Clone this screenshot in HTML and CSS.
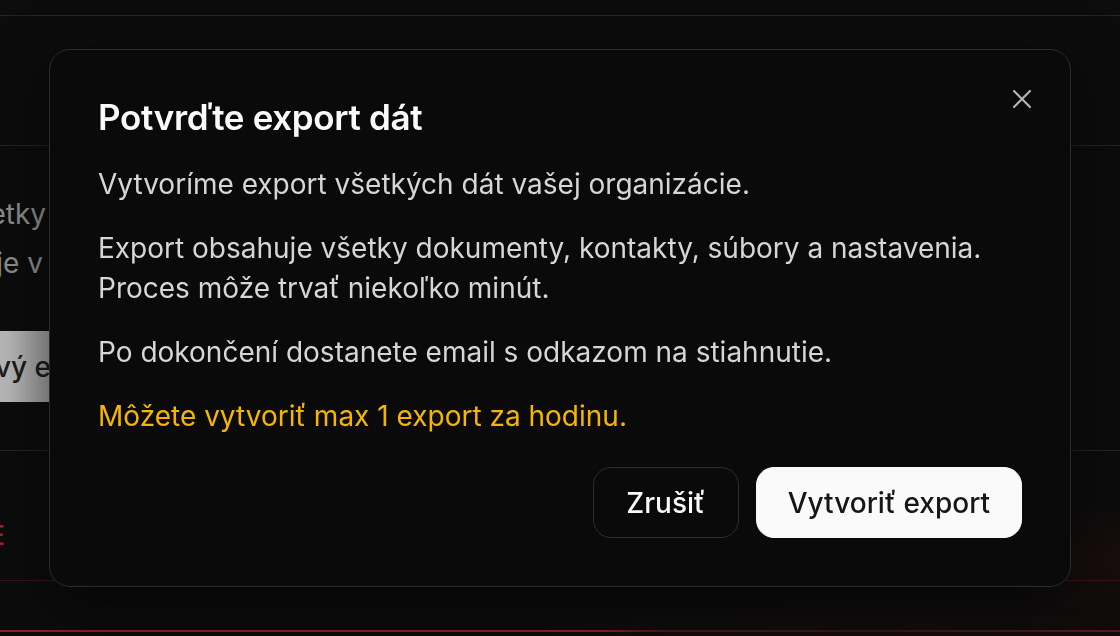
FILE: index.html
```html
<!DOCTYPE html>
<html lang="sk">
<head>
<meta charset="utf-8">
<title>Potvrďte export dát</title>
<link rel="stylesheet" href="styles.css">
</head>
<body>
<div class="page">
  <div class="topbar"></div>
  <div class="head"></div>
  <section class="sec">
    <div class="clip clip-text"><span>Stiahnite si všetky</span></div>
    <div class="clip clip-text clip-2"><span>Súbor obsahuje v</span></div>
    <div class="clip clip-btn"><span class="ghost-btn">Nový ex</span></div>
  </section>
  <section class="danger">
    <div class="clip clip-red"><span>ZMAZAŤ ORGANIZÁCIE</span></div>
  </section>
  <div class="foot">
    <div class="red-line"></div>
  </div>
</div>

<div class="overlay">
  <div class="dialog" role="dialog" aria-labelledby="dlg-title">
    <button class="close" aria-label="Zavrieť">
      <svg width="20" height="20" viewBox="0 0 20 20" fill="none" stroke="currentColor" stroke-width="2.2" stroke-linecap="round"><path d="M2 2 18 18M18 2 2 18"/></svg>
    </button>
    <h2 id="dlg-title" class="title">Potvrďte export dát</h2>
    <div class="body">
      <p>Vytvoríme export všetkých dát vašej organizácie.</p>
      <p>Export obsahuje všetky dokumenty, kontakty, súbory a nastavenia.<br>Proces môže trvať niekoľko minút.</p>
      <p>Po dokončení dostanete email s odkazom na stiahnutie.</p>
      <p class="warn">Môžete vytvoriť max 1 export za hodinu.</p>
    </div>
    <div class="actions">
      <button class="btn btn-outline">Zrušiť</button>
      <button class="btn btn-primary">Vytvoriť export</button>
    </div>
  </div>
</div>
</body>
</html>
```

FILE: styles.css
```css
* { box-sizing: border-box; }
html, body { margin: 0; padding: 0; }
body {
  width: 1120px;
  height: 636px;
  overflow: hidden;
  background: #0c0c0c;
  font-family: Inter, "Noto Sans", sans-serif;
  position: relative;
}

/* background page */
.page {
  height: 636px;
  display: flex;
  flex-direction: column;
  background:
    radial-gradient(ellipse 140px 60px at 1115px 560px, rgba(120, 20, 20, 0.12), transparent 100%),
    radial-gradient(ellipse 420px 36px at 900px 630px, rgba(110, 20, 20, 0.08), transparent 100%),
    #0c0c0c;
}
.topbar { height: 16px; border-bottom: 1px solid #232323; flex: none; }
.head { height: 130px; border-bottom: 1px solid #232323; flex: none; }
.sec {
  height: 305px;
  flex: none;
  border-bottom: 1px solid #232323;
  display: flex;
  flex-direction: column;
  padding-top: 48px;
}
.clip {
  display: flex;
  justify-content: flex-end;
  white-space: nowrap;
}
.clip-text {
  width: 46px;
  font-size: 28px;
  line-height: 40px;
  color: #8c8c8c;
}
.clip-2 { width: 43px; margin-top: 9px; }
.clip-btn { width: 66px; margin-top: 48px; }
.ghost-btn {
  height: 71px;
  padding: 0 0 0 34px;
  display: flex;
  align-items: center;
  font-size: 28px;
  font-weight: 500;
  color: #1c1c1c;
  background: linear-gradient(90deg, #b8b8b8 60%, #959595 95%, #959595);
}
.danger {
  height: 130px;
  flex: none;
  border-bottom: 1px solid #3a1616;
  padding-top: 72px;
}
.clip-red {
  width: 5px;
  font-size: 27px;
  line-height: 26px;
  color: #a02626;
  font-weight: 500;
}
.foot { flex: 1; display: flex; flex-direction: column; justify-content: flex-end; padding-bottom: 4px; }
.red-line {
  height: 2px;
  background: linear-gradient(90deg, #8a2222 0, #8a2222 600px, #4a1818 660px, #3c1515 900px, #5a1c1c 1120px);
}

/* modal */
.overlay {
  position: fixed;
  inset: 0;
  display: flex;
  align-items: center;
  justify-content: center;
}
.dialog {
  position: relative;
  width: 1022px;
  padding: 48px;
  background: #0a0a0a;
  border: 1px solid #2c2c2c;
  border-radius: 21px;
  box-shadow: 0 20px 60px rgba(0, 0, 0, 0.5);
}
.close {
  position: absolute;
  top: 39px;
  right: 38px;
  width: 20px;
  height: 20px;
  padding: 0;
  border: 0;
  background: none;
  color: #b4b4b4;
  display: flex;
}
.title {
  margin: 0;
  font-size: 35px;
  line-height: 38px;
  font-weight: 600;
  letter-spacing: -0.35px;
  color: #fafafa;
}
.body {
  margin-top: 28px;
  display: flex;
  flex-direction: column;
  gap: 24px;
}
.body p {
  margin: 0;
  font-size: 28px;
  line-height: 40px;
  color: #d6d6d6;
}
.body p.warn { color: #f7b500; }
.actions {
  margin-top: 31px;
  display: flex;
  justify-content: flex-end;
  gap: 17px;
}
.btn {
  height: 71px;
  border-radius: 18px;
  font-family: inherit;
  font-size: 28px;
  font-weight: 500;
  cursor: pointer;
}
.btn-outline {
  padding: 0 32.5px;
  background: transparent;
  border: 1.5px solid #2e2e2e;
  color: #fafafa;
}
.btn-primary {
  padding: 0 31px;
  background: #fafafa;
  border: 1px solid #fafafa;
  color: #161616;
}
```
